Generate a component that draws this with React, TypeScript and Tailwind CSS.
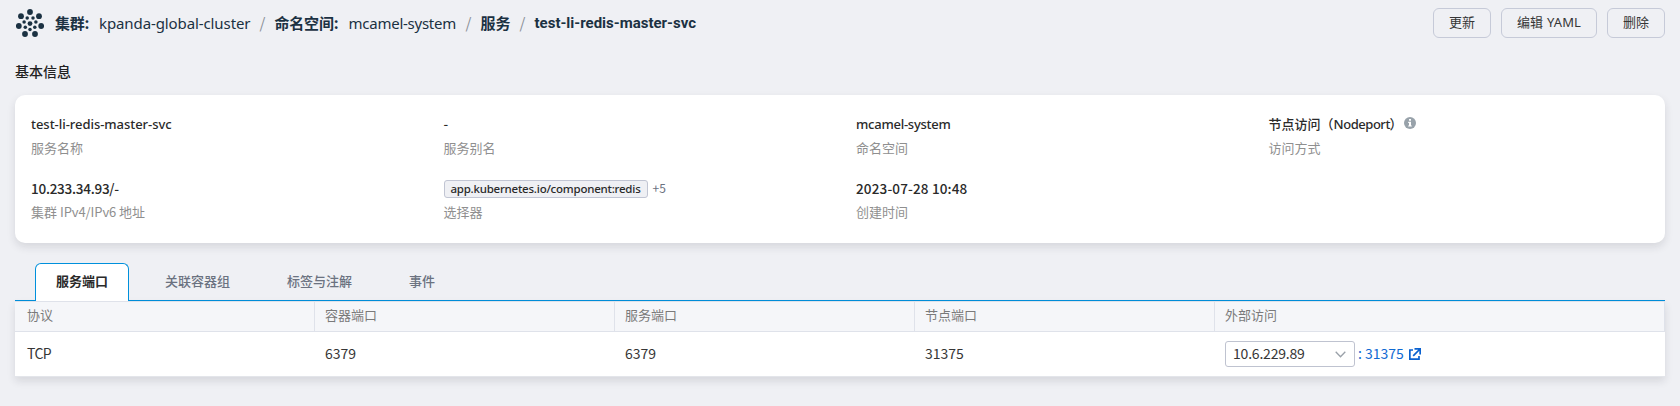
import type { ReactNode } from 'react';

const cjk = "font-['Noto_Sans_CJK_SC','Noto_Sans',sans-serif]";
const latin = "font-['Noto_Sans','Noto_Sans_CJK_SC',sans-serif]";

function Logo() {
  const outer = [[14, 3], [23, 7.2], [25.2, 17], [19, 25], [9, 25], [2.8, 17], [5, 7.2]];
  const inner = [[11.2, 9], [17, 9], [19.9, 13.1], [18.8, 18.2], [14, 20.6], [9.3, 18.2], [8.1, 13.1]];
  return (
    <svg width="28" height="28" viewBox="0 0 28 28" fill="#1b3142" className="shrink-0">
      {outer.map(([x, y]) => <circle key={`${x}-${y}`} cx={x} cy={y} r="2.9" />)}
      {inner.map(([x, y]) => <circle key={`${x}-${y}`} cx={x} cy={y} r="1.75" />)}
      <circle cx="14" cy="14.6" r="2.4" />
    </svg>
  );
}

function Button({ children, width }: { children: ReactNode; width: string }) {
  return (
    <button className={`flex h-[30px] ${width} items-center justify-center rounded-md border border-[#c6cad8] text-[13px] leading-5 text-[#363636] pb-[3px]`}>
      {children}
    </button>
  );
}

function Field({ label, children }: { label: ReactNode; children: ReactNode }) {
  return (
    <div className="h-16">
      <div className="flex h-6 items-center pb-[3px] text-[13px] leading-[20px] font-medium text-[#2a2a2a]">{children}</div>
      <div className="h-[22px] text-[13px] leading-[22px] text-[#8f8f8f]">{label}</div>
    </div>
  );
}

function InfoIcon() {
  return (
    <svg width="12" height="12" viewBox="0 0 12 12" className="-mt-px shrink-0">
      <circle cx="6" cy="6" r="6" fill="#98a2aa" />
      <path d="M5 2h2v1.7H5zM4.2 4.8H7v3.6h.8v1.2H4.2V8.4H5V6h-.8z" fill="#fff" />
    </svg>
  );
}

function Tab({ children }: { children: ReactNode }) {
  return <div className="px-[21px] pt-2 text-[13px] font-medium leading-5 text-[#6b7280]">{children}</div>;
}

function Head({ children }: { children: ReactNode }) {
  return <div className="border-r border-[#dfe2ea] pl-2.5 leading-[26px] first:pl-3">{children}</div>;
}

export default function App() {
  return (
    <div className={`h-[406px] w-[1680px] overflow-hidden bg-[#eff0f4] px-[15px] pt-2 ${cjk}`}>
      <header className="flex h-[30px] justify-between">
        <div className="flex h-[30px] items-center pl-px text-[15px] leading-[28px] whitespace-nowrap text-[#1b3142]">
          <Logo />
          <span className="ml-[11px] w-11 font-bold tracking-[-0.2px]">集群:</span>
          <span className={`w-[160.5px] tracking-[-0.1px] ${latin}`}>kpanda-global-cluster</span>
          <span className="w-[15px] text-[#8a8f96]">/</span>
          <span className="w-[74px] font-bold tracking-[-0.2px]">命名空间:</span>
          <span className={`w-[117px] tracking-[-0.25px] ${latin}`}>mcamel-system</span>
          <span className="w-[15px] text-[#8a8f96]">/</span>
          <span className="w-[39px] font-bold">服务</span>
          <span className="w-[15px] text-[#8a8f96]">/</span>
          <span className="font-['Roboto',sans-serif] font-bold">test-li-redis-master-svc</span>
        </div>
        <div className="flex gap-2.5">
          <Button width="w-[58px]">更新</Button>
          <Button width="w-24">编辑 <span className={`ml-1 tracking-[0.1px] ${latin}`}>YAML</span></Button>
          <Button width="w-[58px]">删除</Button>
        </div>
      </header>

      <h2 className="mt-[23px] h-5 text-[14px] leading-5 font-medium text-[#222]">基本信息</h2>

      <section className="mt-3.5 grid h-[148px] grid-cols-4 content-start rounded-[10px] bg-white pt-[18px] shadow-[0_4px_8px_rgba(30,35,50,0.12)]">
        <div className="pl-4">
          <Field label="服务名称"><span className={`tracking-[-0.04px] ${latin}`}>test-li-redis-master-svc</span></Field>
          <Field label={<>集群 <span className="tracking-[-0.1px]">IPv4/IPv6</span> 地址</>}>
            <span className="text-[13.5px] tracking-[-0.25px]">10.233.34.93/-</span>
          </Field>
        </div>
        <div className="pl-4">
          <Field label="服务别名">-</Field>
          <Field label="选择器">
            <span className={`mt-[3px] flex h-[18px] w-[204px] items-center justify-center rounded-[3px] border border-[#c1c5d3] bg-[#eff0f4] text-[11.5px] leading-4 tracking-[-0.23px] ${latin}`}>
              app.kubernetes.io/component:redis
            </span>
            <span className="ml-[5px] text-xs leading-[20px] font-normal text-[#6b7280]">+5</span>
          </Field>
        </div>
        <div className="pl-4">
          <Field label="命名空间"><span className={`tracking-[-0.25px] ${latin}`}>mcamel-system</span></Field>
          <Field label="创建时间"><span className="text-[13.5px] tracking-[0.15px]">2023-07-28 10:48</span></Field>
        </div>
        <div className="pl-4">
          <Field label="访问方式">
            <span>节点访问（</span>
            <span className={`w-14 tracking-[-0.45px] ${latin}`}>Nodeport</span>
            <span className="mr-px">）</span>
            <InfoIcon />
          </Field>
        </div>
      </section>

      <nav className="mt-5 flex h-[38px] gap-[15px] border-b border-[#0090dc] pl-5">
        <div className="h-[38px] rounded-t-md border border-b-0 border-[#0090dc] bg-white px-5 pt-[7px] text-[13px] leading-5 font-bold text-[#2a2a2a]">服务端口</div>
        <Tab>关联容器组</Tab>
        <Tab>标签与注解</Tab>
        <Tab>事件</Tab>
      </nav>

      <div className="border-b border-[#e3e5ea] bg-white shadow-[0_4px_8px_rgba(30,35,50,0.12)]">
        <div className="grid h-[31px] grid-cols-[300px_300px_300px_300px_450px] border-y border-[#dfe2ea] bg-[#f5f6f9] text-[13px] text-[#7a7a7a]">
          <Head>协议</Head>
          <Head>容器端口</Head>
          <Head>服务端口</Head>
          <Head>节点端口</Head>
          <Head>外部访问</Head>
        </div>
        <div className="grid h-11 grid-cols-[300px_300px_300px_300px_450px] items-center text-[14px] leading-[22px] text-[#363636]">
          <div className="pb-0.5 pl-3 tracking-[-0.6px]">TCP</div>
          <div className="pb-0.5 pl-2.5">6379</div>
          <div className="pb-0.5 pl-2.5">6379</div>
          <div className="pb-0.5 pl-2.5">31375</div>
          <div className="flex items-center pl-2.5">
            <div className="flex h-[26px] w-[130px] items-center justify-between rounded-[3px] border border-[#bfc3d0] bg-white pr-2 pl-[7px]">
              <span className="pb-0.5 tracking-[-0.2px]">10.6.229.89</span>
              <svg width="11" height="7" viewBox="0 0 11 7" fill="none" stroke="#9aa1a9" strokeWidth="1.3"><path d="M.7.8l4.8 5 4.8-5" /></svg>
            </div>
            <span className="ml-[3px] w-[46px] pb-0.5 whitespace-nowrap text-[#0f69d2]">: 31375</span>
            <svg width="12" height="12" viewBox="0 0 12 12" fill="none" stroke="#0b62d0" strokeWidth="1.7" className="ml-[5px]">
              <path d="M4 2H.85v9.15H10V8M5.5.85h5.65V6.5M11 1L4.2 7.8" />
            </svg>
          </div>
        </div>
      </div>
    </div>
  );
}
